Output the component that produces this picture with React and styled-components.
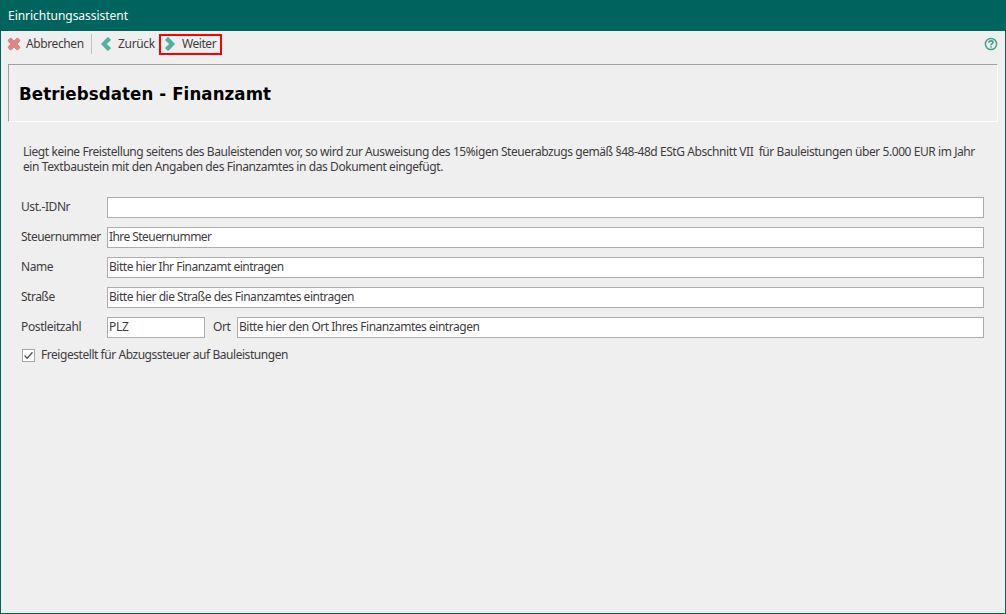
import React from "react";
import styled, { createGlobalStyle } from "styled-components";

const GlobalStyle = createGlobalStyle`
  * { box-sizing: border-box; }
  body { margin: 0; }
  body, input, button { font-family: "Noto Sans", "Open Sans", sans-serif; font-size: 12px; color: #3f3c3f; }
`;

const Window = styled.div`
  width: 1006px;
  height: 614px;
  background: #efefef;
  border: 1px solid #00645e;
  border-top: 0;
`;

const TitleBar = styled.header`
  height: 31px;
  padding-left: 7px;
  background: #00645e;
  color: #fff;
  line-height: 31px;
  letter-spacing: ${(p) => p.$spacing}px;
`;

const Toolbar = styled.nav`
  display: flex;
  align-items: flex-start;
  height: 33px;
  padding: 3px 7px 0 6px;
`;

const ToolButton = styled.button`
  display: flex;
  align-items: center;
  gap: ${(p) => p.$gap}px;
  width: ${(p) => p.$width}px;
  height: 21px;
  padding: 0 0 0 ${(p) => (p.$marked ? 3 : 0)}px;
  border: ${(p) => (p.$marked ? "2px solid #f00" : "0")};
  background: transparent;
  line-height: 17px;
  white-space: nowrap;
  letter-spacing: ${(p) => p.$spacing}px;
  svg { flex: none; margin-bottom: 1px; }
`;

const ButtonText = styled.span`
  padding-bottom: 2px;
`;

const Separator = styled.div`
  width: 1px;
  height: 20px;
  margin-right: 8px;
  background: #c4c4c4;
`;

const HelpButton = styled.button`
  display: flex;
  margin: 3px 0 0 auto;
  padding: 0;
  border: 0;
  background: transparent;
`;

const Heading = styled.h1`
  height: 58px;
  margin: 0 7px;
  padding-left: 10px;
  border: 1px solid;
  border-color: #a0a0a0 #fff #fff #a0a0a0;
  color: #000;
  font: bold 18.5px/57px "DejaVu Sans Condensed", "DejaVu Sans", sans-serif;
  font-stretch: condensed;
  letter-spacing: ${(p) => p.$spacing}px;
`;

const Hint = styled.p`
  margin: 22px 0 23px 22px;
  line-height: 15px;
  white-space: pre;
`;

const Line = styled.span`
  display: block;
  letter-spacing: ${(p) => p.$spacing}px;
`;

const Form = styled.form`
  display: flex;
  flex-direction: column;
  gap: 9px;
  padding: 0 21px 0 20px;
`;

const Row = styled.div`
  display: flex;
  height: 21px;
`;

const Label = styled.label`
  width: ${(p) => p.$width || 86}px;
  padding-left: ${(p) => p.$indent || 0}px;
  line-height: 19px;
  white-space: nowrap;
  letter-spacing: ${(p) => p.$spacing}px;
`;

const Input = styled.input`
  flex: ${(p) => (p.$width ? "none" : 1)};
  width: ${(p) => (p.$width ? p.$width + "px" : "auto")};
  min-width: 0;
  height: 21px;
  padding: 0 1px 2px;
  border: 1px solid #adadad;
  border-radius: 0;
  background: #fff;
  outline: 0;
  letter-spacing: ${(p) => p.$spacing || 0}px;
`;

const CheckRow = styled.label`
  display: flex;
  align-items: center;
  gap: 6px;
  height: 19px;
  margin-top: -2px;
  padding-left: 1px;
  letter-spacing: ${(p) => p.$spacing}px;
`;

const CheckBox = styled.span`
  display: flex;
  width: 13px;
  height: 13px;
  margin-top: 1px;
  border: 1px solid #a5a5a5;
  background: #fff;
`;

const CrossIcon = () => (
  <svg width="14" height="14" viewBox="0 0 14 14">
    <path d="M3 1.300H4.300L7 4 9.700 1.300H11L12.700 3V4.300L10 7 12.700 9.700V11L11 12.700H9.700L7 10 4.300 12.700H3L1.300 11V9.700L4 7 1.300 4.300V3Z" fill="#df8883" stroke="#cf7f7b" strokeWidth=".8" strokeLinejoin="round" />
  </svg>
);

const ChevronIcon = ({ right }) => (
  <svg width="12" height="14" viewBox="0 0 12 14">
    <path transform={right ? "matrix(-1 0 0 1 12 0)" : undefined} d="M8.400.700 10.700 2.900 6.400 7l4.300 4.100-2.300 2.200H7.400L1.400 7 7.400.700Z" fill="#50b3a1" stroke="#459b8c" strokeWidth=".6" strokeLinejoin="round" />
  </svg>
);

const HelpIcon = () => (
  <svg width="14" height="14" viewBox="0 0 14 14" fill="none">
    <circle cx="7" cy="7" r="5.600" stroke="#44a08c" strokeWidth="1.500" />
    <path d="M4.800 5.600C4.900 4.300 5.700 3.800 7 3.800c1.300 0 2.100.6 2.100 1.500C9.100 6.600 7 6.600 7 8.200M7 9.200v1.400" stroke="#44a08c" strokeWidth="1.700" />
  </svg>
);

const FIELDS = [
  { label: "Ust.-IDNr", labelSpacing: -0.41, value: "" },
  { label: "Steuernummer", labelSpacing: -0.51, value: "Ihre Steuernummer", spacing: -0.56 },
  { label: "Name", labelSpacing: -0.42, value: "Bitte hier Ihr Finanzamt eintragen", spacing: -0.476 },
  { label: "Straße", labelSpacing: -0.5, value: "Bitte hier die Straße des Finanzamtes eintragen", spacing: -0.47 },
];

export default function App() {
  return (
    <>
      <GlobalStyle />
      <Window>
        <TitleBar $spacing={-0.03}>Einrichtungsassistent</TitleBar>
        <Toolbar>
          <ToolButton $width={84} $gap={5} $spacing={-0.4}><CrossIcon /><ButtonText>Abbrechen</ButtonText></ToolButton>
          <Separator />
          <ToolButton $width={59} $gap={6} $spacing={-0.32}><ChevronIcon right={false} /><ButtonText>Zurück</ButtonText></ToolButton>
          <ToolButton $width={63} $gap={6} $spacing={-0.45} $marked><ChevronIcon right /><ButtonText>Weiter</ButtonText></ToolButton>
          <HelpButton aria-label="Hilfe"><HelpIcon /></HelpButton>
        </Toolbar>
        <Heading $spacing={0.09}>Betriebsdaten - Finanzamt</Heading>
        <Hint>
          <Line $spacing={-0.43}>{"Liegt keine Freistellung seitens des Bauleistenden vor, so wird zur Ausweisung des 15%igen Steuerabzugs gemäß §48-48d EStG Abschnitt VII  für Bauleistungen über 5.000 EUR im Jahr"}</Line>
          <Line $spacing={-0.407}>ein Textbaustein mit den Angaben des Finanzamtes in das Dokument eingefügt.</Line>
        </Hint>
        <Form>
          {FIELDS.map((f) => (
            <Row key={f.label}>
              <Label $spacing={f.labelSpacing}>{f.label}</Label>
              <Input defaultValue={f.value} $spacing={f.spacing} />
            </Row>
          ))}
          <Row>
            <Label $spacing={-0.38}>Postleitzahl</Label>
            <Input defaultValue="PLZ" $width={98} $spacing={-0.3} />
            <Label $width={32} $indent={8} $spacing={-0.4}>Ort</Label>
            <Input defaultValue="Bitte hier den Ort Ihres Finanzamtes eintragen" $spacing={-0.474} />
          </Row>
          <CheckRow $spacing={-0.45}>
            <CheckBox>
              <svg width="11" height="11" viewBox="0 0 11 11"><path d="M1.500 5.500 4.200 8.300 9.500 2.300" fill="none" stroke="#555" strokeWidth="1.300" /></svg>
            </CheckBox>
            Freigestellt für Abzugssteuer auf Bauleistungen
          </CheckRow>
        </Form>
      </Window>
    </>
  );
}
